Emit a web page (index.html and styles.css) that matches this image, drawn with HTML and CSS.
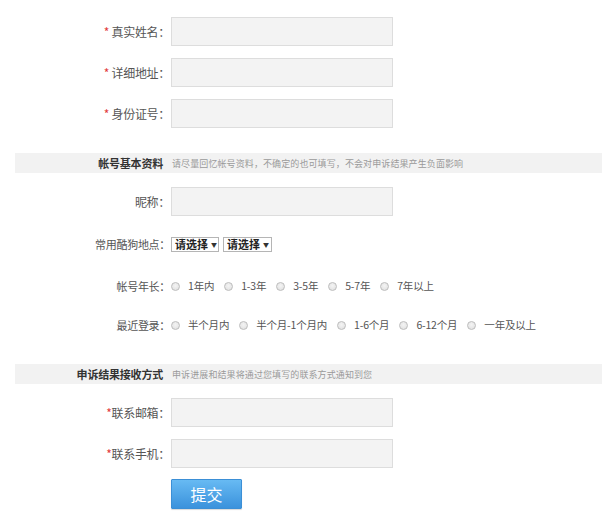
FILE: index.html
```html
<!DOCTYPE html>
<html lang="zh-CN">
<head>
<meta charset="utf-8">
<title>申诉表单</title>
<link rel="stylesheet" href="styles.css">
</head>
<body>
<div class="page">
  <div class="row r1">
    <label class="label"><span class="star">*</span> 真实姓名：</label>
    <div class="input"></div>
  </div>
  <div class="row r2">
    <label class="label"><span class="star">*</span> 详细地址：</label>
    <div class="input"></div>
  </div>
  <div class="row r2">
    <label class="label"><span class="star">*</span> 身份证号：</label>
    <div class="input"></div>
  </div>

  <div class="bar bar1">
    <span class="bar-title">帐号基本资料</span>
    <span class="bar-desc">请尽量回忆帐号资料，不确定的也可填写，不会对申诉结果产生负面影响</span>
  </div>

  <div class="row r-nick">
    <label class="label">昵称：</label>
    <div class="input"></div>
  </div>
  <div class="row r-sel">
    <label class="label small">常用酷狗地点：</label>
    <div class="select">请选择 <span class="arrow">▼</span></div>
    <div class="select sel2">请选择 <span class="arrow">▼</span></div>
  </div>
  <div class="row r-rad1">
    <label class="label small">帐号年长：</label>
    <div class="options">
      <span class="opt"><span class="radio"></span>1年内</span>
      <span class="opt"><span class="radio"></span>1-3年</span>
      <span class="opt"><span class="radio"></span>3-5年</span>
      <span class="opt"><span class="radio"></span>5-7年</span>
      <span class="opt"><span class="radio"></span>7年以上</span>
    </div>
  </div>
  <div class="row r-rad2">
    <label class="label small">最近登录：</label>
    <div class="options">
      <span class="opt"><span class="radio"></span>半个月内</span>
      <span class="opt"><span class="radio"></span>半个月-1个月内</span>
      <span class="opt"><span class="radio"></span>1-6个月</span>
      <span class="opt"><span class="radio"></span>6-12个月</span>
      <span class="opt"><span class="radio"></span>一年及以上</span>
    </div>
  </div>

  <div class="bar bar2">
    <span class="bar-title">申诉结果接收方式</span>
    <span class="bar-desc">申诉进展和结果将通过您填写的联系方式通知到您</span>
  </div>

  <div class="row r-mail">
    <label class="label"><span class="star">*</span>联系邮箱：</label>
    <div class="input"></div>
  </div>
  <div class="row r2">
    <label class="label"><span class="star">*</span>联系手机：</label>
    <div class="input"></div>
  </div>
  <div class="row r-btn">
    <span class="label"></span>
    <button class="submit" type="button">提交</button>
  </div>
</div>
</body>
</html>
```

FILE: styles.css
```css
html, body {
  margin: 0;
  padding: 0;
  background: #ffffff;
}
body {
  width: 602px;
  height: 528px;
  overflow: hidden;
  font-family: "Noto Sans CJK SC", "Microsoft YaHei", "Noto Sans", sans-serif;
  color: #555555;
}
.page {
  display: flex;
  flex-direction: column;
  padding-top: 17px;
}
.row {
  display: flex;
  align-items: center;
}
.label {
  width: 171px;
  box-sizing: border-box;
  padding-right: 1px;
  text-align: right;
  font-size: 12px;
  line-height: 16px;
  color: #555555;
  flex: none;
  letter-spacing: -0.3px;
}
.label.small {
  font-size: 11px;
}
.star {
  color: #e23b3b;
}
.input {
  width: 222px;
  height: 29px;
  box-sizing: border-box;
  border: 1px solid #dddddd;
  background: #f3f3f3;
}
.r2 { margin-top: 12px; }
.r-nick { margin-top: 14px; }
.r-sel { margin-top: 20px; }
.r-rad1 { margin-top: 26px; }
.r-rad2 { margin-top: 23px; }
.r-mail { margin-top: 14px; }
.r-btn { margin-top: 11px; }

.bar {
  margin-left: 15px;
  height: 20px;
  background: #f2f2f2;
  display: flex;
  align-items: center;
}
.bar1 { margin-top: 25px; }
.bar2 { margin-top: 31px; }
.bar-title {
  width: 148px;
  text-align: right;
  font-size: 11px;
  font-weight: bold;
  color: #333333;
  flex: none;
  letter-spacing: -0.2px;
}
.bar-desc {
  margin-left: 9px;
  font-size: 9px;
  color: #9a9a9a;
  letter-spacing: 0.1px;
}

.select {
  width: 48px;
  height: 15px;
  box-sizing: border-box;
  border: 1px solid #b5b5b5;
  font-size: 11px;
  font-weight: bold;
  color: #222222;
  line-height: 13px;
  padding-left: 3px;
  display: flex;
  align-items: center;
  gap: 3px;
  background: #ffffff;
}
.sel2 {
  margin-left: 4px;
  width: 49px;
}
.arrow {
  font-size: 6px;
  line-height: 13px;
  color: #333333;
}

.options {
  display: flex;
  align-items: center;
}
.opt {
  display: flex;
  align-items: center;
  font-size: 10.5px;
  line-height: 16px;
  color: #555555;
  margin-right: 10px;
  letter-spacing: -0.2px;
}
.radio {
  width: 9px;
  height: 9px;
  box-sizing: border-box;
  border-radius: 50%;
  border: 1px solid #bdbdbd;
  background: radial-gradient(circle at 50% 40%, #f4f4f4 0%, #dedede 100%);
  margin-right: 8px;
  flex: none;
}

.submit {
  width: 71px;
  height: 30px;
  border: 1px solid #3b8fd6;
  border-radius: 1px;
  background: linear-gradient(#67baf3, #3b92dc);
  color: #ffffff;
  font-family: "Noto Sans CJK SC", "Microsoft YaHei", sans-serif;
  font-size: 16px;
  line-height: 26px;
  padding: 0;
  margin: 0;
  box-shadow: 0 1px 1px rgba(0,0,0,0.15);
}
```
